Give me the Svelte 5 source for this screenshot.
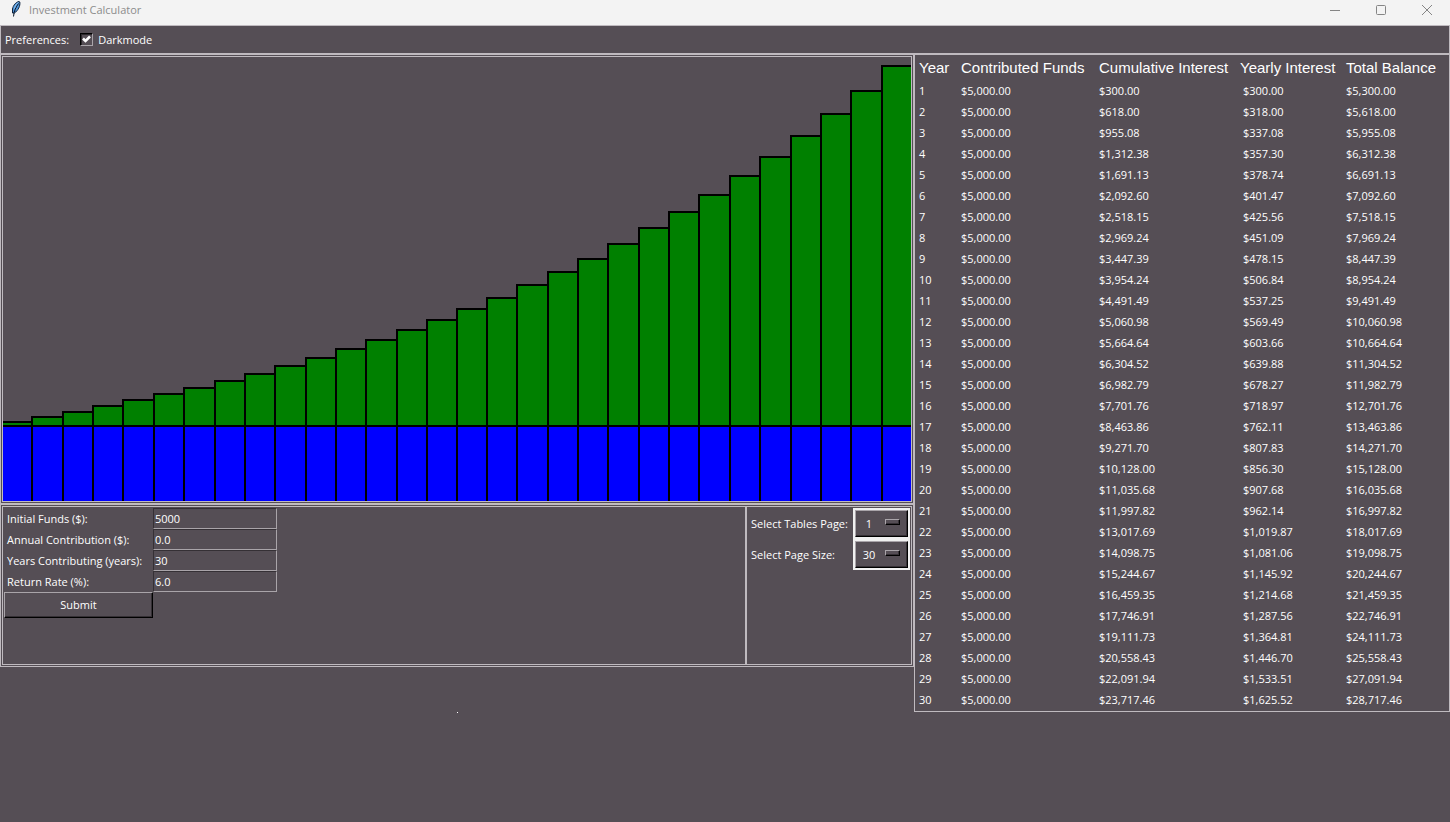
<script>
  let dark = $state(true);
  let initial = $state('5000');
  let annual = $state('0.0');
  let years = $state('30');
  let rate = $state('6.0');
  let page = $state('1');
  let pageSize = $state('30');

  const money = (n) =>
    '$' + n.toLocaleString('en-US', { minimumFractionDigits: 2, maximumFractionDigits: 2 });

  function project(start, yearly, count, percent) {
    const list = [];
    let balance = start;
    let funds = start;
    for (let year = 1; year <= count; year++) {
      const interest = (balance * percent) / 100;
      balance += interest;
      list.push({ year, funds, cumulative: balance - funds, interest, balance });
      balance += yearly;
      funds += yearly;
    }
    return list;
  }

  let rows = $state(project(5000, 0, 30, 6));

  function submit(event) {
    event.preventDefault();
    rows = project(Number(initial), Number(annual), Number(years), Number(rate));
  }

  const chartWidth = 911;
  const chartHeight = 445;
  const plotHeight = 436;

  let bars = $derived.by(() => {
    const top = Math.max(...rows.map((r) => r.balance));
    const step = chartWidth / rows.length;
    return rows.map((r, i) => {
      const left = Math.round(i * step) - 1;
      return {
        left,
        width: Math.round((i + 1) * step) - 1 - left,
        base: chartHeight - Math.round((r.funds / top) * plotHeight),
        peak: chartHeight - Math.round((r.balance / top) * plotHeight)
      };
    });
  });

  let shown = $derived(
    rows.slice((Number(page) - 1) * Number(pageSize), Number(page) * Number(pageSize))
  );
</script>

<div class="window" class:light={!dark}>
  <header class="titlebar">
    <svg class="feather" viewBox="0 0 12 16" width="12" height="16" aria-hidden="true">
      <path d="M9 0.500 C6 1 3 4.500 2.500 8 L2.500 12 L4.500 12 C8 9.500 10.500 5 9.800 1 Z" fill="#4f94d8" stroke="#10233c" stroke-width="1" />
      <path d="M8.500 2.500 C6 6 4 9.500 3.500 15.500" fill="none" stroke="#0a1626" stroke-width="1" />
      <path d="M8.500 1.500 C6.500 2.500 5 5 4.500 7.500" fill="none" stroke="#8cc4f5" stroke-width="1" />
    </svg>
    <h1>Investment Calculator</h1>
    <div class="controls">
      <button type="button" aria-label="Minimize">
        <svg viewBox="0 0 12 12" width="12" height="12"><path d="M1 6.500H11" /></svg>
      </button>
      <button type="button" aria-label="Maximize">
        <svg viewBox="0 0 12 12" width="12" height="12"><rect x="1.500" y="1.500" width="9" height="9" rx="1" /></svg>
      </button>
      <button type="button" aria-label="Close">
        <svg viewBox="0 0 12 12" width="12" height="12"><path d="M1 1L11 11M11 1L1 11" /></svg>
      </button>
    </div>
  </header>

  <div class="preferences">
    <span>Preferences:</span>
    <label><input type="checkbox" bind:checked={dark} />Darkmode</label>
  </div>

  <main>
    <div class="left">
      <section class="frame">
        <div class="inner">
          <svg class="chart" viewBox="0 0 {chartWidth - 2} {chartHeight - 1}" preserveAspectRatio="none" role="img" aria-label="Balance by year">
            {#each bars as bar}
              <rect class="interest" x={bar.left} y={bar.peak} width={bar.width} height={bar.base - bar.peak} />
              <rect class="funds" x={bar.left} y={bar.base} width={bar.width} height={chartHeight + 2 - bar.base} />
            {/each}
          </svg>
        </div>
      </section>

      <section class="frame panels">
        <form class="inner entries" onsubmit={submit}>
          <label for="initial">Initial Funds ($):</label>
          <input id="initial" type="text" bind:value={initial} />
          <label for="annual">Annual Contribution ($):</label>
          <input id="annual" type="text" bind:value={annual} />
          <label for="years">Years Contributing (years):</label>
          <input id="years" type="text" bind:value={years} />
          <label for="rate">Return Rate (%):</label>
          <input id="rate" type="text" bind:value={rate} />
          <button type="submit">Submit</button>
        </form>
        <div class="inner options">
          <label for="page">Select Tables Page:</label>
          <div class="menu">
            <select id="page" bind:value={page}>
              <option>1</option>
            </select>
            <span class="indicator"></span>
          </div>
          <label for="size">Select Page Size:</label>
          <div class="menu">
            <select id="size" bind:value={pageSize}>
              <option>10</option>
              <option>20</option>
              <option>30</option>
            </select>
            <span class="indicator"></span>
          </div>
        </div>
      </section>
    </div>

    <section class="results">
      <table>
        <colgroup>
          <col class="c-year" />
          <col class="c-funds" />
          <col class="c-cumulative" />
          <col class="c-interest" />
          <col class="c-balance" />
        </colgroup>
        <thead>
          <tr>
            <th>Year</th>
            <th>Contributed Funds</th>
            <th>Cumulative Interest</th>
            <th class="wide">Yearly Interest</th>
            <th>Total Balance</th>
          </tr>
        </thead>
        <tbody>
          {#each shown as row (row.year)}
            <tr>
              <td>{row.year}</td>
              <td>{money(row.funds)}</td>
              <td>{money(row.cumulative)}</td>
              <td>{money(row.interest)}</td>
              <td>{money(row.balance)}</td>
            </tr>
          {/each}
        </tbody>
      </table>
    </section>

    <div class="status"></div>
  </main>
</div>

<style>
  :global(body) {
    margin: 0;
    background: #554e55;
  }

  .window {
    --bg: #554e55;
    --fg: #ffffff;
    --line: #bfbabf;
    min-height: 100vh;
    background: var(--bg);
    color: var(--fg);
    font-family: 'Open Sans', 'Noto Sans', sans-serif;
    font-size: 11px;
    line-height: 16px;
  }

  .window.light {
    --bg: #f0f0f0;
    --fg: #000000;
    --line: #8a8a8a;
  }

  .window :is(input, select, button) {
    box-sizing: border-box;
    margin: 0;
    border-radius: 0;
    font: inherit;
    color: inherit;
  }

  .titlebar {
    display: flex;
    align-items: flex-start;
    height: 25px;
    padding-left: 10px;
    background: #f3f3f3;
    color: #8c8c8c;
  }

  .feather {
    margin-top: 1px;
  }

  h1 {
    flex: 1;
    margin: 2px 0 0 7px;
    font-size: 11px;
    font-weight: 400;
    line-height: 16px;
  }

  .controls {
    display: flex;
  }

  .controls button {
    display: flex;
    align-items: center;
    justify-content: center;
    width: 46px;
    height: 19px;
    padding: 0;
    border: 0;
    background: none;
  }

  .controls svg {
    fill: none;
    stroke: #858585;
    stroke-width: 1;
  }

  .preferences {
    display: flex;
    align-items: center;
    gap: 11px;
    height: 27px;
    padding-left: 4px;
    border: 1px solid var(--line);
  }

  .preferences label {
    display: flex;
    align-items: center;
    gap: 5px;
  }

  .preferences input {
    appearance: none;
    width: 13px;
    height: 13px;
    border: 1px solid;
    border-color: #000000 #a9a4a9 #a9a4a9 #000000;
    box-shadow: inset 1px 1px 0 #2b272b;
  }

  .preferences input:checked {
    background: url("data:image/svg+xml,%3Csvg xmlns='http://www.w3.org/2000/svg' viewBox='0 0 11 11'%3E%3Cpath d='M2 4.500L4.500 7L9 2.500' fill='none' stroke='white' stroke-width='2.500'/%3E%3C/svg%3E") center / 11px 11px no-repeat;
  }

  main {
    display: grid;
    grid-template-columns: minmax(0, 1fr) auto;
    align-items: start;
  }

  .frame {
    padding: 1px;
    border: 1px solid var(--line);
  }

  .inner {
    border: 1px solid var(--line);
  }

  .chart {
    display: block;
    width: 100%;
    height: 444px;
    overflow: hidden;
    shape-rendering: crispEdges;
  }

  .chart rect {
    stroke: #000000;
    stroke-width: 2;
    vector-effect: non-scaling-stroke;
  }

  .interest {
    fill: #008000;
  }

  .funds {
    fill: #0000ff;
  }

  .panels {
    display: flex;
  }

  .entries {
    flex: 1;
    display: grid;
    grid-template-columns: 149px 124px;
    grid-template-rows: repeat(4, 21px) 26px;
    min-height: 155px;
    padding: 1px;
  }

  .entries label {
    padding: 3px 0 0 3px;
    white-space: nowrap;
  }

  .entries input {
    width: 100%;
    height: 21px;
    padding: 0 1px;
    border: 1px solid;
    border-color: #353035 #a9a4a9 #a9a4a9 #353035;
    background: var(--bg);
  }

  .entries button {
    padding: 0;
    border: 1px solid;
    border-color: #a9a4a9 #000000 #000000 #a9a4a9;
    background: var(--bg);
    box-shadow: inset -1px -1px 0 #353035;
  }

  .options {
    display: grid;
    grid-template-columns: minmax(0, 1fr) 57px;
    grid-auto-rows: 31px;
    align-items: center;
    width: 160px;
    padding: 1px 1px 1px 3px;
  }

  .options label {
    padding-left: 1px;
    white-space: nowrap;
  }

  .menu {
    position: relative;
    display: flex;
    height: 27px;
    border: 2px solid #f0f0f0;
  }

  .menu select {
    appearance: none;
    width: 100%;
    padding: 0 25px 0 0;
    border: 1px solid;
    border-color: #a9a4a9 #000000 #000000 #a9a4a9;
    background: var(--bg);
    box-shadow: inset -1px -1px 0 #353035;
    text-align: center;
    text-align-last: center;
  }

  .indicator {
    position: absolute;
    top: 9px;
    right: 8px;
    width: 13px;
    height: 4px;
    border: 1px solid;
    border-color: #a9a4a9 #000000 #000000 #a9a4a9;
    box-shadow: inset -1px -1px 0 #353035;
    pointer-events: none;
  }

  .results {
    padding: 1px 0;
    border: 1px solid var(--line);
  }

  table {
    table-layout: fixed;
    width: 534px;
    border-collapse: collapse;
  }

  .c-year {
    width: 42px;
  }

  .c-funds {
    width: 138px;
  }

  .c-cumulative {
    width: 144px;
  }

  .c-interest {
    width: 103px;
  }

  th,
  td {
    padding: 0 0 0 4px;
    text-align: left;
    white-space: nowrap;
  }

  th {
    height: 24px;
    font-family: 'Liberation Sans', Arial, sans-serif;
    font-size: 15px;
    font-weight: 400;
    line-height: 24px;
  }

  th.wide {
    padding-left: 1px;
  }

  td {
    height: 21px;
    line-height: 21px;
  }

  .status {
    justify-self: center;
    width: 1px;
    height: 1px;
    background: var(--fg);
  }
</style>
